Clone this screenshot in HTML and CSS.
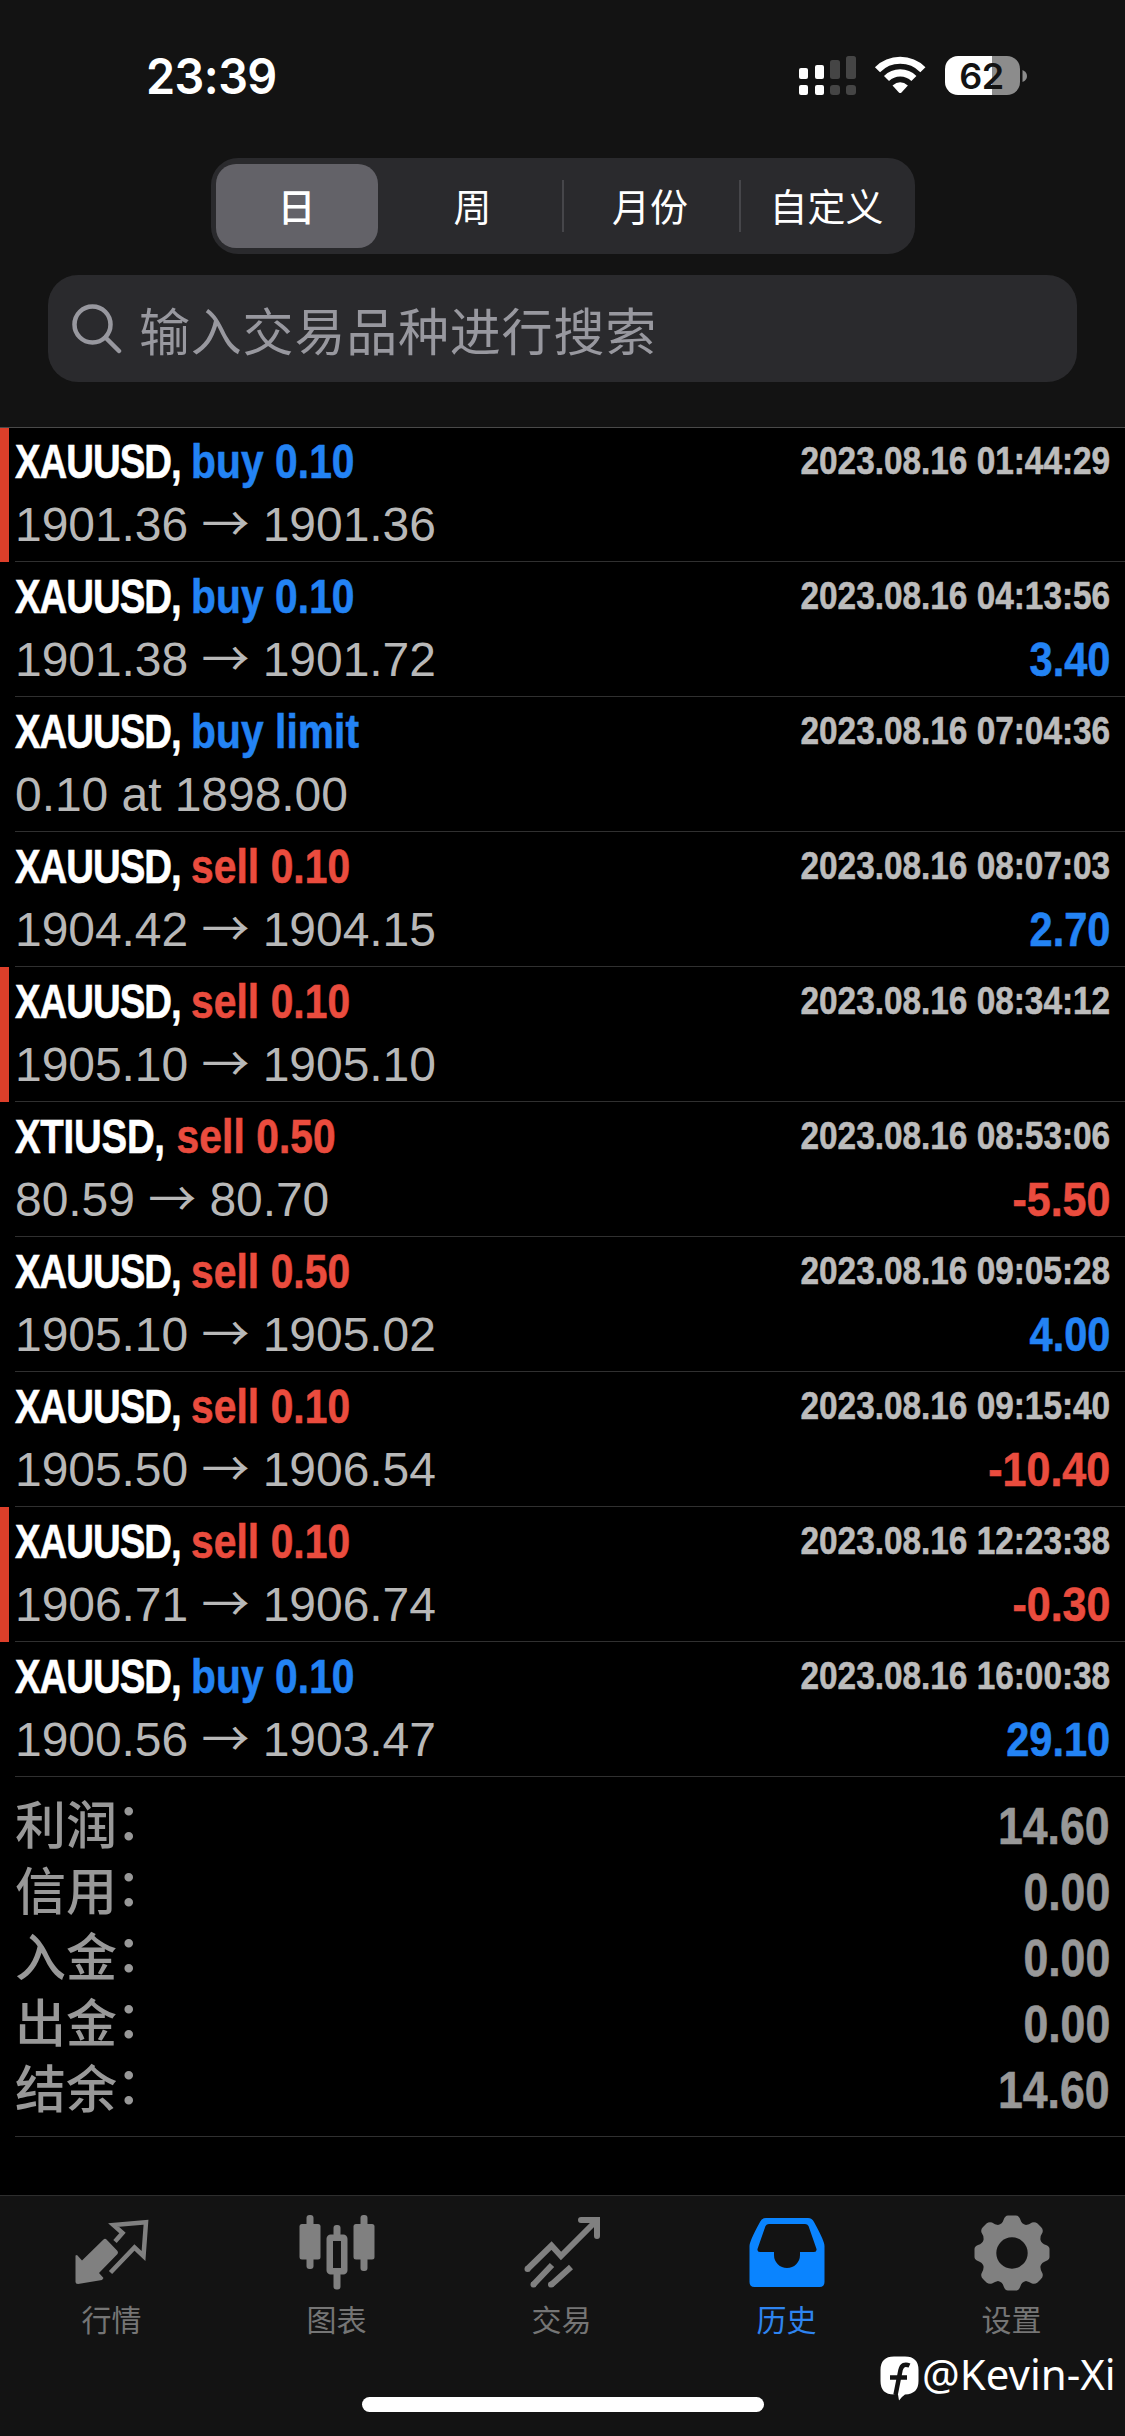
FILE: index.html
```html
<!DOCTYPE html>
<html lang="zh-CN">
<head>
<meta charset="utf-8">
<title>历史</title>
<link rel="stylesheet" href="styles.css">
</head>
<body>
<header class="top">
  <div class="status">
    <span class="clock">23:39</span>
    <svg class="signals" width="230" height="40" viewBox="0 0 230 40">
      <g fill="#fff"><rect x="1" y="12" width="9" height="11" rx="2"/><rect x="1" y="29" width="9" height="10" rx="2"/><rect x="17" y="9" width="9" height="14" rx="2"/><rect x="17" y="29" width="9" height="10" rx="2"/></g>
      <g fill="#454545"><rect x="32" y="4" width="10" height="19" rx="2.5"/><rect x="32" y="29" width="10" height="10" rx="3"/><rect x="48" y="0" width="10" height="23" rx="2.5"/><rect x="48" y="29" width="10" height="10" rx="3"/></g>
      <g fill="none" stroke="#fff" stroke-width="7.2"><path d="M79.500 13.700 A32 32 0 0 1 124.900 13.700"/><path d="M88.500 22.500 A19.500 19.500 0 0 1 115.900 22.500"/></g>
      <path d="M94.500 29.500 Q102.200 23 109.900 29.500 L103.500 36.400 Q102.200 37.600 100.900 36.400 Z" fill="#fff"/>
      <path d="M160 0 H194 V39 H160 A13 13 0 0 1 147 26 V13 A13 13 0 0 1 160 0 Z" fill="#fff"/>
      <path d="M194 0 H209 A13 13 0 0 1 222 13 V26 A13 13 0 0 1 209 39 H194 Z" fill="#8c8c8c"/>
      <path d="M224.500 14 Q229 16 229 20 Q229 24 224.500 26 Z" fill="#8c8c8c"/>
      <text class="battery" x="183.500" y="32.500" text-anchor="middle">62</text>
    </svg>
  </div>
  <nav class="segments">
    <span class="segment selected">日</span>
    <span class="segment">周</span>
    <span class="segment ruled">月份</span>
    <span class="segment ruled">自定义</span>
  </nav>
  <div class="search">
    <svg width="50" height="50" viewBox="0 0 50 50" fill="none" stroke="#98989f" stroke-width="4.500" stroke-linecap="round"><circle cx="20.500" cy="20.500" r="18"/><path d="M33.500 33.500 L47 47"/></svg>
    <span>输入交易品种进行搜索</span>
  </div>
</header>
<main class="history">
  <section class="deal flagged">
    <div class="line head"><span class="title">XAUUSD, <span class="side blue">buy 0.10</span></span><time>2023.08.16 01:44:29</time></div>
    <div class="line"><span class="price">1901.36 <i>→</i> 1901.36</span></div>
  </section>
  <section class="deal">
    <div class="line head"><span class="title">XAUUSD, <span class="side blue">buy 0.10</span></span><time>2023.08.16 04:13:56</time></div>
    <div class="line"><span class="price">1901.38 <i>→</i> 1901.72</span><b class="blue">3.40</b></div>
  </section>
  <section class="deal">
    <div class="line head"><span class="title">XAUUSD, <span class="side blue">buy limit</span></span><time>2023.08.16 07:04:36</time></div>
    <div class="line"><span class="price">0.10 at 1898.00</span></div>
  </section>
  <section class="deal">
    <div class="line head"><span class="title">XAUUSD, <span class="side red">sell 0.10</span></span><time>2023.08.16 08:07:03</time></div>
    <div class="line"><span class="price">1904.42 <i>→</i> 1904.15</span><b class="blue">2.70</b></div>
  </section>
  <section class="deal flagged">
    <div class="line head"><span class="title">XAUUSD, <span class="side red">sell 0.10</span></span><time>2023.08.16 08:34:12</time></div>
    <div class="line"><span class="price">1905.10 <i>→</i> 1905.10</span></div>
  </section>
  <section class="deal">
    <div class="line head"><span class="title loose">XTIUSD, <span class="side red">sell 0.50</span></span><time>2023.08.16 08:53:06</time></div>
    <div class="line"><span class="price">80.59 <i>→</i> 80.70</span><b class="red">-5.50</b></div>
  </section>
  <section class="deal">
    <div class="line head"><span class="title">XAUUSD, <span class="side red">sell 0.50</span></span><time>2023.08.16 09:05:28</time></div>
    <div class="line"><span class="price">1905.10 <i>→</i> 1905.02</span><b class="blue">4.00</b></div>
  </section>
  <section class="deal">
    <div class="line head"><span class="title">XAUUSD, <span class="side red">sell 0.10</span></span><time>2023.08.16 09:15:40</time></div>
    <div class="line"><span class="price">1905.50 <i>→</i> 1906.54</span><b class="red">-10.40</b></div>
  </section>
  <section class="deal flagged">
    <div class="line head"><span class="title">XAUUSD, <span class="side red">sell 0.10</span></span><time>2023.08.16 12:23:38</time></div>
    <div class="line"><span class="price">1906.71 <i>→</i> 1906.74</span><b class="red">-0.30</b></div>
  </section>
  <section class="deal">
    <div class="line head"><span class="title">XAUUSD, <span class="side blue">buy 0.10</span></span><time>2023.08.16 16:00:38</time></div>
    <div class="line"><span class="price">1900.56 <i>→</i> 1903.47</span><b class="blue">29.10</b></div>
  </section>
  <dl class="totals">
    <div><dt>利润<i>：</i></dt><dd>14.60</dd></div>
    <div><dt>信用<i>：</i></dt><dd>0.00</dd></div>
    <div><dt>入金<i>：</i></dt><dd>0.00</dd></div>
    <div><dt>出金<i>：</i></dt><dd>0.00</dd></div>
    <div><dt>结余<i>：</i></dt><dd>14.60</dd></div>
  </dl>
</main>
<footer class="bottom">
  <nav class="tabs">
    <span class="tab">
      <svg width="76" height="76" viewBox="0 0 76 76"><path d="M29.500 24.500 Q31 23 32.500 24.500 L43.500 36 Q44.500 37.500 43.500 39 L25 58 L29.500 63 L28 65 L4 69 Q1.500 69 1.500 67 V40.500 L3 40 L8 45.500 Z" fill="#808080"/><path d="M41 26.500 L48.500 18 L39.500 10 L72 7.300 L69.500 41 L60.500 32.500 L36.500 57.500" fill="none" stroke="#808080" stroke-width="4.500"/></svg>
      行情</span>
    <span class="tab">
      <svg width="76" height="76" viewBox="0 0 76 76" fill="#808080"><rect x="0.500" y="9" width="21" height="35.500" rx="2.500"/><rect x="7.500" y="0" width="7" height="54" rx="3"/><rect x="54.500" y="9" width="21" height="35.500" rx="2.500"/><rect x="61.500" y="0" width="7" height="56" rx="3"/><rect x="34.500" y="10" width="7" height="12" rx="3"/><rect x="34.500" y="57" width="7" height="17.500" rx="3"/><rect x="30.750" y="22.750" width="14.500" height="33.500" rx="1" fill="none" stroke="#808080" stroke-width="6.500"/></svg>
      图表</span>
    <span class="tab">
      <svg width="76" height="76" viewBox="0 0 76 76" fill="none" stroke="#808080" stroke-width="6"><path d="M3 54.500 L27.500 30.500 L37 41 L72 6" /><path d="M57 5 H73 V21" stroke-linecap="round"/><path d="M28 50 L9 70 M47 52 L27 70" /><g fill="#808080" stroke="none"><circle cx="3.500" cy="54" r="3"/><circle cx="9.500" cy="69.500" r="3"/><circle cx="27" cy="69.500" r="3"/></g></svg>
      交易</span>
    <span class="tab active">
      <svg width="76" height="76" viewBox="0 0 76 76"><path fill="#0a84ff" fill-rule="evenodd" d="M17 3 H59 Q63 3 65 7 Q75.500 26 75.500 31 V67 Q75.500 72 70.500 72 H5.500 Q0.500 72 0.500 67 V31 Q0.500 26 11 7 Q13 3 17 3 Z M20 9 Q17.500 9 16.500 11 L8.500 34 Q8 37 11 37 H25 V40 A13 13 0 0 0 51 40 V37 H65 Q68 37 67.500 34 L59.500 11 Q58.500 9 56 9 Z"/></svg>
      历史</span>
    <span class="tab">
      <svg width="76" height="76" viewBox="0 0 76 76"><path fill="#808080" fill-rule="evenodd" d="M34 .5 H42 Q45 .5 46.500 5 Q47.500 9 52 10 Q55 9.500 58 7.500 Q61 6.500 63.500 8.500 L67 12 Q69.500 14.500 68.500 17.500 Q66 21 66.500 25 Q67.500 28.500 72 30 Q75.500 31.500 75.500 34 V42 Q75.500 44.500 72 46 Q67.500 47.500 66.500 51 Q66 55 68.500 58.500 Q69.500 61.500 67 64 L63.500 67.500 Q61 69.500 58 68.500 Q55 66.500 52 66 Q47.500 67 46.500 71 Q45 75.500 42 75.500 H34 Q31 75.500 29.500 71 Q28.500 67 24 66 Q21 66.500 18 68.500 Q15 69.500 12.500 67.500 L9 64 Q6.500 61.500 7.500 58.500 Q10 55 9.500 51 Q8.500 47.500 4 46 Q.5 44.500 .5 42 V34 Q.5 31.500 4 30 Q8.500 28.500 9.500 25 Q10 21 7.500 17.500 Q6.500 14.500 9 12 L12.500 8.500 Q15 6.500 18 7.500 Q21 9.500 24 10 Q28.500 9 29.500 5 Q31 .5 34 .5 Z M38 22.300 A15.700 15.700 0 1 0 38 53.700 A15.700 15.700 0 1 0 38 22.300 Z"/></svg>
      设置</span>
  </nav>
  <div class="home-bar"></div>
  <div class="watermark">
    <svg width="40" height="46" viewBox="0 0 40 46"><path fill="#fff" d="M14 .5 H25 Q38.500 .5 38.500 14 V25 Q38.500 38 25 38.500 Q22.500 40 19 44.500 L18 38.500 H14 Q.5 38.500 .5 25 V14 Q.5 .5 14 .5 Z"/><path d="M29.500 9.500 Q22.500 6.500 20.500 14 L15.500 39 M10 21.500 H27" fill="none" stroke="#131313" stroke-width="4.500"/></svg>
    <span>@Kevin-Xi</span>
  </div>
</footer>
</body>
</html>
```
FILE: styles.css
```css
* { box-sizing: border-box; }
body {
  margin: 0;
  width: 1125px;
  height: 2436px;
  display: flex;
  flex-direction: column;
  background: #000;
  color: #fff;
  font-family: "Liberation Sans", "Noto Sans CJK SC", sans-serif;
  overflow: hidden;
}
svg { display: block; flex: none; }

/* Status bar, period switch and search */
.top {
  height: 428px;
  background: #131313;
  border-bottom: 1px solid #4a4a4a;
  display: flex;
  flex-direction: column;
  align-items: center;
}
.status {
  width: 100%;
  height: 158px;
  padding: 56px 97px 0 146px;
  display: flex;
  justify-content: space-between;
  align-items: flex-start;
}
.clock {
  font: 600 49px/42px Inter, sans-serif;
  letter-spacing: -0.6px;
  transform: scaleX(0.955);
  transform-origin: left;
}
.battery { font: 600 36px Inter, sans-serif; letter-spacing: -0.5px; fill: #131313; }
.segments {
  width: 704px;
  height: 96px;
  border-radius: 27px;
  background: #2a2a2d;
  display: grid;
  grid-template-columns: 173px 178px 177px 176px;
  padding: 6px 0;
}
.segment {
  position: relative;
  font: 400 38px/81px "Noto Sans CJK SC", sans-serif;
  text-align: center;
}
.selected { margin: 0 6px 0 5px; border-radius: 20px; background: #636268; font-weight: 500; }
.ruled::before {
  content: "";
  position: absolute;
  left: 0;
  top: 16px;
  width: 2px;
  height: 52px;
  background: #46464a;
}
.search {
  width: 1029px;
  height: 107px;
  margin-top: 21px;
  padding-left: 24px;
  border-radius: 30px;
  background: #2a2a2d;
  color: #98989f;
  display: flex;
  align-items: center;
  gap: 17px;
  font: 400 51px/98px "Noto Sans CJK SC", sans-serif;
  letter-spacing: 0.8px;
}

/* Deals */
.deal {
  height: 135px;
  padding: 0 15px;
  background: linear-gradient(#303030, #303030) 15px 134px / 1110px 1px no-repeat;
}
.deal:first-child { height: 134px; background-position: 15px 133px; }
.deal:first-child .head { height: 63px; line-height: 68px; }
.flagged { border-left: 9px solid #dd3f2a; padding-left: 6px; background-position: 6px 134px; }
.flagged:first-child { background-position: 6px 133px; }
.line {
  height: 62px;
  display: flex;
  align-items: baseline;
  line-height: 68px;
}
.head { height: 64px; line-height: 70px; }

/* Condensed bold face */
.title, time, .line b, dd {
  font-weight: 700;
  transform-origin: left;
  white-space: nowrap;
  -webkit-text-stroke: 0.6px currentColor;
}
.title { font-size: 48px; letter-spacing: -1.3px; transform: scaleX(0.8); }
.loose { letter-spacing: -0.3px; }
.side {
  display: inline-block;
  margin-left: 1.5px;
  letter-spacing: 0.1px;
  transform: scaleX(1.06);
  transform-origin: left;
}
time, .line b, dd { margin-left: auto; transform-origin: right; }
time {
  position: relative;
  top: -4px;
  font-size: 39px;
  color: #bcbcbc;
  transform: scaleX(0.855);
}
.price { font-size: 48px; letter-spacing: -0.05px; color: #b8b8b8; }
.price i { font: 400 48px/1 "Noto Sans CJK SC", sans-serif; }
.line b { font-size: 48px; transform: scaleX(0.865); }
.line b.red { transform: scaleX(0.895); }
.blue { color: #2383f4; }
.red { color: #ea4c3e; }

/* Account totals */
.totals {
  margin: 0 0 0 15px;
  padding: 12px 15px 0 0;
  height: 360px;
  border-bottom: 1px solid #303030;
  color: #989898;
}
.totals div { height: 66px; display: flex; justify-content: space-between; align-items: baseline; line-height: 66px; }
dt { font: 500 51px/66px "Noto Sans CJK SC", sans-serif; }
dt i { position: relative; top: -4px; left: -1px; font-style: normal; }
dd { font-size: 51px; transform: scaleX(0.875); }

/* Tab bar */
.bottom {
  position: relative;
  margin-top: auto;
  height: 241px;
  background: #131313;
  border-top: 1px solid #2e2e2e;
}
.tabs { display: grid; grid-template-columns: repeat(5, 1fr); }
.tab {
  display: flex;
  flex-direction: column;
  align-items: center;
  gap: 6px;
  padding: 19px 2px 0 0;
  font: 400 30px/42px "Noto Sans CJK SC", sans-serif;
  color: #757575;
}
.active { color: #2e84f0; }
.home-bar { width: 402px; height: 15px; margin: 58px auto 0; border-radius: 8px; background: #fff; }
.watermark {
  position: absolute;
  left: 880px;
  top: 160px;
  display: flex;
  gap: 2px;
  font: 400 42px/36px "Noto Sans", sans-serif;
}
```
